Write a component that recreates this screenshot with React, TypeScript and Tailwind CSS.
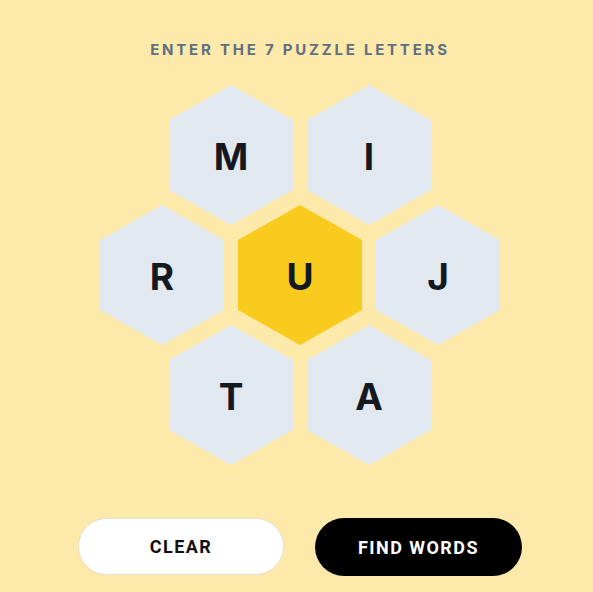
import React from "react";

const hexClip =
  "[clip-path:polygon(50%_0,100%_25%,100%_75%,50%_100%,0_75%,0_25%)]";

function Hex({ letter, center = false }: { letter: string; center?: boolean }) {
  return (
    <div
      className={`${hexClip} flex h-[140px] w-[124px] items-center justify-center ${
        center ? "bg-[#f9cb1f]" : "bg-[#e2e8f0]"
      }`}
    >
      <span className="pt-[2px] text-[37px] font-bold leading-none text-[#141821] [font-family:Inter,'Noto_Sans',sans-serif]">
        {letter}
      </span>
    </div>
  );
}

export default function App() {
  return (
    <div className="flex min-h-[592px] w-full flex-col items-center bg-[#fde9a9] pl-[7px]">
      <h1 className="mt-[41px] text-[15px] font-bold uppercase leading-[18px] tracking-[0.185em] text-[#5f6e82] [font-family:Inter,'Noto_Sans',sans-serif]">
        Enter the 7 puzzle letters
      </h1>

      <div className="mt-[26px] flex flex-col items-center">
        <div className="flex gap-[14px]">
          <Hex letter="M" />
          <Hex letter="I" />
        </div>
        <div className="-mt-[20px] flex gap-[14px]">
          <Hex letter="R" />
          <Hex letter="U" center />
          <Hex letter="J" />
        </div>
        <div className="-mt-[20px] flex gap-[14px]">
          <Hex letter="T" />
          <Hex letter="A" />
        </div>
      </div>

      <div className="mt-[53px] flex gap-[31px]">
        <button className="flex h-[57px] w-[206px] items-center justify-center rounded-full border border-[#e4e1d8] bg-white text-[18px] font-bold tracking-[0.08em] text-[#111111] [font-family:Roboto,sans-serif]">
          CLEAR
        </button>
        <button className="flex h-[58px] w-[207px] items-center justify-center rounded-full bg-black text-[18px] font-bold tracking-[0.08em] text-white [font-family:Roboto,sans-serif]">
          FIND WORDS
        </button>
      </div>
    </div>
  );
}
